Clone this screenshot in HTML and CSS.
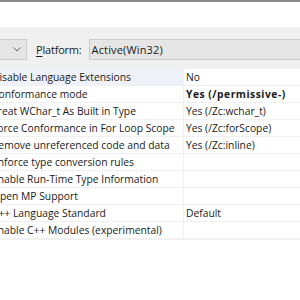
FILE: index.html
```html
<!DOCTYPE html>
<html>
<head>
<meta charset="utf-8">
<link rel="stylesheet" href="styles.css">
</head>
<body>
<div class="topline"></div>
<div class="blank"></div>
<div class="toolbar">
  <div class="combo combo-small"><svg class="chev" width="8" height="5" viewBox="0 0 8 5"><path d="M0.5 0.5 L4 4 L7.5 0.5" fill="none" stroke="#606060" stroke-width="1"/></svg></div>
  <span class="label"><u>P</u>latform:</span>
  <div class="combo combo-wide"><span>Active(Win32)</span></div>
</div>
<div class="grid">
  <div class="row sel"><div class="name">Disable Language Extensions</div><div class="val">No</div></div>
  <div class="row"><div class="name">Conformance mode</div><div class="val bold">Yes (/permissive-)</div></div>
  <div class="row"><div class="name">Treat WChar_t As Built in Type</div><div class="val">Yes (/Zc:wchar_t)</div></div>
  <div class="row"><div class="name">Force Conformance in For Loop Scope</div><div class="val">Yes (/Zc:forScope)</div></div>
  <div class="row"><div class="name">Remove unreferenced code and data</div><div class="val">Yes (/Zc:inline)</div></div>
  <div class="row"><div class="name">Enforce type conversion rules</div><div class="val"></div></div>
  <div class="row"><div class="name">Enable Run-Time Type Information</div><div class="val"></div></div>
  <div class="row"><div class="name">Open MP Support</div><div class="val"></div></div>
  <div class="row"><div class="name">C++ Language Standard</div><div class="val">Default</div></div>
  <div class="row"><div class="name">Enable C++ Modules (experimental)</div><div class="val"></div></div>
</div>
</body>
</html>
```
FILE: styles.css
```css
html, body {
  margin: 0;
  padding: 0;
  background: #ffffff;
  overflow: hidden;
}
body {
  width: 300px;
  height: 300px;
  font-family: "Open Sans", "Noto Sans", sans-serif;
  font-size: 10.3px;
  color: #1a1a1a;
}
.topline {
  height: 2px;
  background: #8a8a8a;
}
.blank {
  height: 25px;
}
.toolbar {
  background: #f0f0f0;
  height: 42px;
  display: flex;
  align-items: flex-start;
  padding-top: 12px;
  box-sizing: border-box;
  margin-right: -100px;
  font-size: 11px;
}
.combo {
  height: 21px;
  box-sizing: border-box;
  border: 1px solid #cccccc;
  background: #e5e5e5;
  display: flex;
  align-items: center;
}
.combo-small {
  width: 28px;
  margin-left: -1px;
  justify-content: flex-end;
  padding-right: 5px;
}
.label {
  margin-left: 9px;
  margin-right: 7px;
  line-height: 21px;
  letter-spacing: -0.2px;
}
.label u {
  text-decoration-thickness: 1px;
  text-underline-offset: 2px;
}
.combo-wide {
  flex: 1;
  padding-left: 2px;
  letter-spacing: 0.15px;
}
.grid {
  border-bottom: 1px solid #f0f0f0;
}
.row {
  display: grid;
  grid-template-columns: 183px 1fr;
  height: 17px;
  box-sizing: border-box;
  border-bottom: 1px solid #f0f0f0;
}
.name {
  margin-left: -8px;
  white-space: nowrap;
  overflow: hidden;
  line-height: 16px;
}
.val {
  border-left: 1px solid #f0f0f0;
  padding-left: 2px;
  line-height: 16px;
  white-space: nowrap;
}
.sel .name {
  background: #eef2f8;
}
.bold {
  font-weight: bold;
  letter-spacing: 0.5px;
}
```
